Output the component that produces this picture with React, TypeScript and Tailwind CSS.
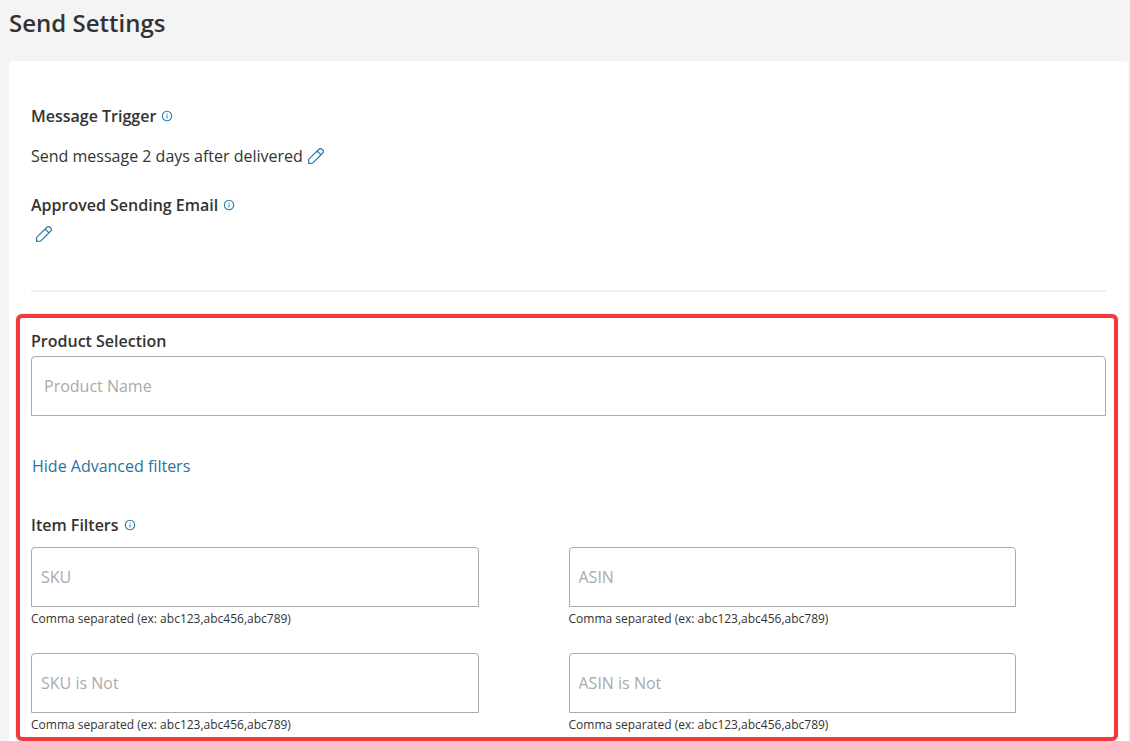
import { useState } from 'react';

interface FilterField {
  id: string;
  label: string;
}

const ITEM_FILTERS: FilterField[] = [
  { id: 'sku', label: 'SKU' },
  { id: 'asin', label: 'ASIN' },
  { id: 'sku-not', label: 'SKU is Not' },
  { id: 'asin-not', label: 'ASIN is Not' },
];

const INPUT_CLASS =
  'h-[60px] rounded-t border border-[#aaaaaa] bg-white text-base text-[#333333] placeholder:text-[#aaaaaa] outline-none focus:border-[#1f75a8]';

function InfoIcon() {
  return (
    <svg viewBox="0 0 12 12" className="size-3" fill="none" stroke="#2a7cab" aria-hidden="true">
      <circle cx="6" cy="6" r="4.7" strokeWidth="1.1" />
      <path d="M6 5.3v3.2M6 3.3v1.1" />
    </svg>
  );
}

function PencilIcon() {
  return (
    <svg viewBox="0 0 16 16" className="size-4" fill="none" stroke="#2a7cab" strokeWidth="1.2" strokeLinejoin="round" aria-hidden="true">
      <path d="M.6 15.4V11.4L11 1.2a2 2 0 0 1 2.8 0l1 1a2 2 0 0 1 0 2.8L4.600 15.2z" />
      <path d="M9.2 3l3.8 3.8" />
    </svg>
  );
}

function InfoButton({ label }: { label: string }) {
  return (
    <button type="button" aria-label={label} className="cursor-pointer">
      <InfoIcon />
    </button>
  );
}

export default function App() {
  const [showAdvanced, setShowAdvanced] = useState(true);

  return (
    <div className="min-h-screen bg-[#f4f4f4] pl-[9px] pr-0.5 font-['Open_Sans',sans-serif] text-base text-[#333333]">
      <h1 className="pt-1.5 pb-[22px] text-2xl leading-[33px] font-semibold">Send Settings</h1>

      <main className="min-h-[calc(100vh-61px)] rounded-t bg-white pt-[43px]">
        <section className="mx-[22px] border-b-2 border-[#eeeeee] pb-12">
          <div className="flex items-center gap-[5px]">
            <h2 className="font-semibold">Message Trigger</h2>
            <InfoButton label="About message trigger" />
          </div>
          <div className="mt-4 flex items-center gap-[5px]">
            <p>Send message 2 days after delivered</p>
            <button type="button" aria-label="Edit message trigger" className="cursor-pointer">
              <PencilIcon />
            </button>
          </div>
          <div className="mt-[25px] flex items-center gap-[5px]">
            <h2 className="font-semibold">Approved Sending Email</h2>
            <InfoButton label="About approved sending email" />
          </div>
          <button type="button" aria-label="Edit sending email" className="mt-[9px] ml-[5px] block cursor-pointer">
            <PencilIcon />
          </button>
        </section>

        <section className="mt-[22px] mr-2.5 ml-[7px] rounded-md border-4 border-[#f33a3a] pt-[11px] pr-2 pb-1 pl-[11px] shadow-[0_0_1px_#777777]">
          <label htmlFor="product-name" className="block font-semibold">
            Product Selection
          </label>
          <input
            id="product-name"
            type="text"
            placeholder="Product Name"
            className={`${INPUT_CLASS} mt-[3px] block w-full px-3`}
          />

          <button
            type="button"
            onClick={() => setShowAdvanced(!showAdvanced)}
            className="mt-[38px] ml-px block cursor-pointer text-[#2a72a0]"
          >
            {showAdvanced ? 'Hide Advanced filters' : 'Show Advanced filters'}
          </button>

          {showAdvanced && (
            <>
              <div className="mt-[35px] flex items-center gap-[5px]">
                <h2 className="font-semibold">Item Filters</h2>
                <InfoButton label="About item filters" />
              </div>
              <div className="mt-2.5 grid grid-cols-2 gap-y-[26px]">
                {ITEM_FILTERS.map((field) => (
                  <div key={field.id}>
                    <input
                      id={field.id}
                      type="text"
                      aria-label={field.label}
                      aria-describedby={`${field.id}-hint`}
                      placeholder={field.label}
                      className={`${INPUT_CLASS} block w-5/6 px-[9px]`}
                    />
                    <p id={`${field.id}-hint`} className="mt-1 text-xs">
                      Comma separated (ex: abc123,abc456,abc789)
                    </p>
                  </div>
                ))}
              </div>
            </>
          )}
        </section>
      </main>
    </div>
  );
}
